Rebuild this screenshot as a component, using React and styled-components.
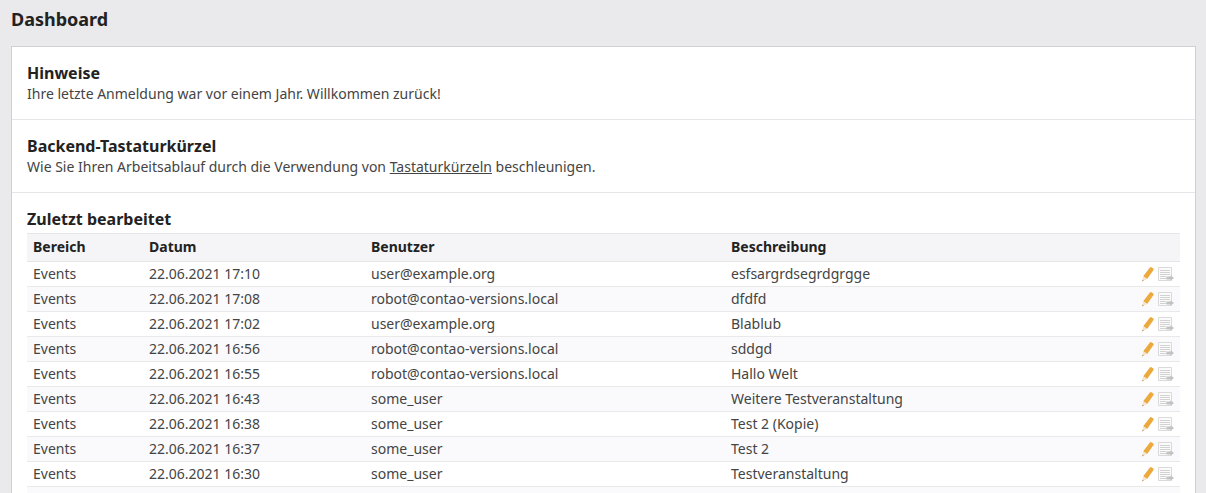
import React from "react";
import styled, { createGlobalStyle } from "styled-components";

const Global = createGlobalStyle`
  * { box-sizing: border-box; }
  body { margin: 0; background: #eaeaec; color: #444; font: 14px/20px "Noto Sans", sans-serif; overflow: hidden; }
`;
const Page = styled.main`padding: 9px 10px 0 11px;`;
const Title = styled.h1`margin: 0 0 16px; font-size: 18px; line-height: 21px; font-weight: 700; color: #222;`;
const Panel = styled.div`background: #fff; border: 1px solid #d0d0d2;`;
const Section = styled.section`padding: 16px 15px 15px; & + & { border-top: 1px solid #e6e6e8; }`;
const Heading = styled.h2`margin: 0; font-size: 16px; line-height: 20px; font-weight: 700; color: #222;`;
const Text = styled.p`margin: 0; line-height: 21px;`;
const Link = styled.a`color: #444; text-decoration: underline;`;
const Table = styled.table`width: 100%; margin-top: 4px; border-collapse: collapse; table-layout: fixed;`;
const Th = styled.th`padding: 3px 6px 4px; text-align: left; font-weight: 700; color: #222; background: #f5f5f8; border: solid #e6e6e8; border-width: 1px 0; width: ${p => p.$w || "auto"};`;
const Row = styled.tr`height: 25px; &:nth-child(even) { background: #fafafc; }`;
const Td = styled.td`padding: 2px 6px; border-bottom: 1px solid #e9e9e9;`;
const Actions = styled.div`display: flex; justify-content: flex-end; gap: 2px;`;
const IconLink = styled.a`display: block; width: 16px; height: 16px;`;
const Icon = styled.svg`display: block; width: 16px; height: 16px;`;

const Pencil = () => (
  <Icon viewBox="0 0 16 16">
    <path fill="#ecaa3e" d="M9.9 1.6q.6-.8 1.5-.3l1.9 1.3q.8.6.2 1.5L7.2 13 3.2 10.3z" />
    <path fill="#f5e4c8" d="M3.2 10.3l4 2.7-4.8 2.2z" />
    <path fill="#b08a58" d="M2.6 13.6l1.2.9-1.6.9z" />
  </Icon>
);
const Diff = () => (
  <Icon viewBox="0 0 16 16" fill="none">
    <path fill="#fbfbfb" stroke="#dadada" d="M.5 1.5h13v13H.5z" />
    <path stroke="#d2d2d2" d="M2 4.5h10M2 6.5h10M2 8.5h10M2 10.5h6M2 12.5h7" />
    <path fill="#c2c2c2" d="M8.5 10.5h4V9.2L16 12l-3.5 2.8v-1.3h-4z" />
  </Icon>
);

const rows = [
  ["22.06.2021 17:10", "user@example.org", "esfsargrdsegrdgrgge"],
  ["22.06.2021 17:08", "robot@contao-versions.local", "dfdfd"],
  ["22.06.2021 17:02", "user@example.org", "Blablub"],
  ["22.06.2021 16:56", "robot@contao-versions.local", "sddgd"],
  ["22.06.2021 16:55", "robot@contao-versions.local", "Hallo Welt"],
  ["22.06.2021 16:43", "some_user", "Weitere Testveranstaltung"],
  ["22.06.2021 16:38", "some_user", "Test 2 (Kopie)"],
  ["22.06.2021 16:37", "some_user", "Test 2"],
  ["22.06.2021 16:30", "some_user", "Testveranstaltung"],
];

export default function App() {
  return (
    <Page>
      <Global />
      <Title>Dashboard</Title>
      <Panel>
        <Section>
          <Heading>Hinweise</Heading>
          <Text>Ihre letzte Anmeldung war vor einem Jahr. Willkommen zurück!</Text>
        </Section>
        <Section>
          <Heading>Backend-Tastaturkürzel</Heading>
          <Text>Wie Sie Ihren Arbeitsablauf durch die Verwendung von <Link href="#shortcuts">Tastaturkürzeln</Link> beschleunigen.</Text>
        </Section>
        <Section>
          <Heading>Zuletzt bearbeitet</Heading>
          <Table>
            <thead>
              <tr><Th $w="116px">Bereich</Th><Th $w="222px">Datum</Th><Th $w="360px">Benutzer</Th><Th>Beschreibung</Th><Th $w="60px" aria-label="Aktionen" /></tr>
            </thead>
            <tbody>
              {rows.map(([date, user, text]) => (
                <Row key={date}>
                  <Td>Events</Td><Td>{date}</Td><Td>{user}</Td><Td>{text}</Td>
                  <Td><Actions><IconLink href="#edit" aria-label="Bearbeiten"><Pencil /></IconLink><IconLink href="#diff" aria-label="Unterschiede anzeigen"><Diff /></IconLink></Actions></Td>
                </Row>
              ))}
              <Row><Td colSpan={5} /></Row>
            </tbody>
          </Table>
        </Section>
      </Panel>
    </Page>
  );
}
